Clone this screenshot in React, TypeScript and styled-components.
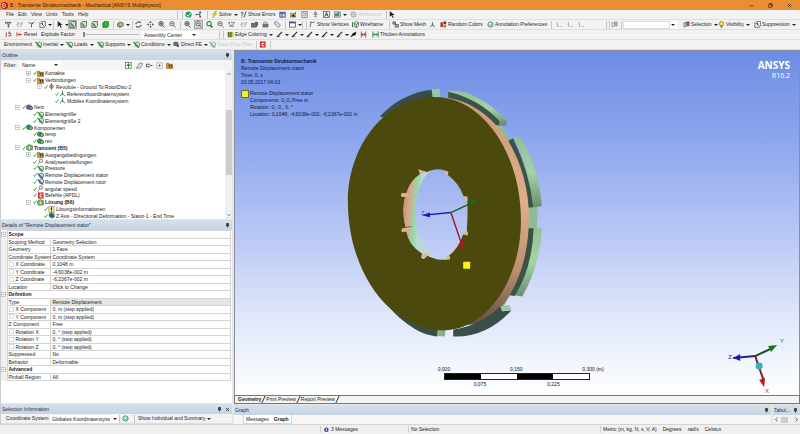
import React from "react";
import styled, { createGlobalStyle, css } from "styled-components";

const Global = createGlobalStyle`
  * { box-sizing: border-box; }
  html, body, #root { margin: 0; height: 100%; }
  body { font: 5px/7px "Liberation Sans", Arial, sans-serif; color: #222; background: #f0f0f0; overflow: hidden; }
  button, input, select, a { font: inherit; color: inherit; }
`;

const resetButton = css`
  appearance: none; border: 0; padding: 0; margin: 0; background: none; white-space: nowrap;
`;

const Page = styled.div`
  display: flex; flex-direction: column; min-height: 100vh; white-space: nowrap;
`;
const TitleBar = styled.header`
  display: flex; align-items: center; height: 10px; flex: none; padding: 0 2px 0 1px; gap: 2px; background: #ea8d33; color: #2b1a08;
`;
const Title = styled.h1`margin: 0; flex: 1; font: inherit;`;
const WindowButton = styled.button`${resetButton} width: 17px; height: 10px; display: grid; place-items: center;`;

const Bar = styled.div`
  display: flex; align-items: center; height: 10px; flex: none; background: #f2f2f2; border-bottom: 1px solid #dedede; overflow: hidden;
`;
const Slot = styled.div<{ $w: number }>`flex: 0 0 ${(p) => p.$w}px; display: flex; align-items: center;`;
const Tool = styled.button<{ $w: number; $off?: boolean; $on?: boolean }>`
  ${resetButton}
  flex: 0 0 ${(p) => p.$w}px; height: 9px; display: flex; align-items: center; gap: 1px;
  color: ${(p) => (p.$off ? "#b5b5b5" : "#262626")};
  opacity: ${(p) => (p.$off ? 0.6 : 1)};
  & > svg:first-child { background: ${(p) => (p.$on ? "#cfcfcf" : "none")}; outline: ${(p) => (p.$on ? "1px solid #aaa" : "none")}; }
`;
const Sep = styled.span<{ $w?: number }>`
  flex: 0 0 ${(p) => p.$w ?? 4}px; height: 8px; border-left: 1px solid #c6c6c6;
`;
const Caret = styled.span`
  margin-left: 1px; border: 1px solid transparent; border-width: 2px 2px 0; border-top-color: #222; width: 0; height: 0;
`;
const Combo = styled.select<{ $w: number; $line?: boolean }>`
  appearance: none; border: ${(p) => (p.$line ? "1px solid #ddd" : "0")}; padding: 0 2px; background: #fff; height: 8px; line-height: 6px; width: ${(p) => p.$w}px; border-radius: 0;
`;
const ComboBox = styled.label<{ $w: number }>`
  flex: 0 0 ${(p) => p.$w}px; display: flex; align-items: center; background: #fff; padding-right: 3px; overflow: hidden;
`;
const Range = styled.input`
  appearance: none; width: 56px; height: 5px; margin: 0; background: linear-gradient(#bbb, #bbb) 0 2px / 100% 1px no-repeat;
  &::-webkit-slider-thumb { appearance: none; width: 2px; height: 5px; background: #888; }
`;

const Workspace = styled.main`display: flex; flex: 1; min-height: 0; gap: 2px; background: #e4e6ea;`;
const LeftColumn = styled.div`flex: 0 0 29%; display: flex; flex-direction: column; gap: 1px; min-width: 0;`;
const RightColumn = styled.div`flex: 1; display: flex; flex-direction: column; min-width: 0;`;
const Panel = styled.section<{ $grow?: number }>`
  flex: ${(p) => (p.$grow ? `${p.$grow} 0 0` : "none")}; min-height: 0; display: flex; flex-direction: column; background: #fff; border-left: 1px solid #c8ccd2;
`;
const PanelHead = styled.div`
  display: flex; align-items: center; gap: 3px; flex: none; height: 10px; padding: 0 2px 0 1px; background: linear-gradient(#d6e0ec, #c6d4e4); color: #26323f;
`;
const PanelTitle = styled.h2`margin: 0; flex: 1; font: inherit;`;
const IconButton = styled.button`${resetButton} display: grid; place-items: center;`;
const FilterBar = styled.div`display: flex; align-items: center; height: 10px; flex: none; background: #f4f4f4; padding-left: 3px;`;
const TreeArea = styled.div`display: flex; flex: 1; min-height: 0;`;
const Tree = styled.ul`
  list-style: none; margin: 0; padding: 0; flex: 1; display: flex; flex-direction: column; min-height: 0;
`;
const TreeRow = styled.li<{ $level: number; $bold?: boolean }>`
  flex: 1 1 0; min-height: 0; display: flex; align-items: center; line-height: 6px;
  padding-left: ${(p) => 14 + p.$level * 11}px; font-weight: ${(p) => (p.$bold ? 700 : 400)};
`;
const TreeText = styled.span`padding-left: 1px;`;
const Expander = styled.span`width: 7px; display: flex; align-items: center;`;
const ScrollTrack = styled.div`
  width: 7px; background: #f0f0f0; display: flex; flex-direction: column; align-items: center; justify-content: space-between; padding: 2px 0;
`;
const ScrollThumb = styled.div`width: 6px; height: 65px; margin-bottom: 4px; background: #cdcdcd;`;

const Grid = styled.table`
  border-collapse: collapse; width: calc(100% - 1px); height: 151px; line-height: 6px; table-layout: fixed;
  th, td { padding: 0 2px; border: 1px solid #d4d4d4; text-align: left; font-weight: 400; }
  td:first-child { width: 6px; border-width: 0; background: #f0f0f0; padding: 0; }
  th { padding: 0 1px; }
`;
const Group = styled.th`&& { font-weight: 700; }`;
const Value = styled.td<{ $shade?: boolean }>`background: ${(p) => (p.$shade ? "#e6e6e0" : "#fff")};`;
const Label = styled.label`display: flex; align-items: center; gap: 2px;`;
const Tick = styled.input`appearance: none; margin: 0; width: 5px; height: 5px; border: 1px solid #dcdcdc; background: #fff;`;

const Canvas = styled.div`
  position: relative; flex: 1; min-height: 0; overflow: hidden; border: 1px solid #8a8f99; border-bottom: 0;
  background: linear-gradient(#6d8de5 0%, #8da5ec 25%, #b3c3f3 50%, #dce4fa 75%, #ffffff 100%);
`;
const Scene = styled.svg`position: absolute; inset: 0; width: 100%; height: 100%;`;
const Caption = styled.div`position: absolute; left: 6px; top: 7px; color: #101840; line-height: 7px;`;
const Strong = styled.strong`display: block;`;
const Legend = styled.div`display: grid; grid-template-columns: 8px auto; gap: 0 1px; margin-top: 4px;`;
const Swatch = styled.span`width: 8px; height: 8px; background: #f6f01e; border: 1px solid #6d7020;`;
const Brand = styled.div`
  position: absolute; right: 9px; top: 9px; text-align: right; color: #fff; font: 700 10px/11px "Open Sans", sans-serif;
`;
const Release = styled.div`font-size: 7px; line-height: 9px; font-weight: 400;`;
const Ruler = styled.div`position: absolute; left: 37%; bottom: 7px; width: 146px; color: #111;`;
const RulerLabels = styled.div<{ $inner?: boolean }>`
  display: flex; justify-content: space-between; margin: ${(p) => (p.$inner ? "0 30px" : "0 -14px 0 -6px")};
`;
const RulerBar = styled.div`display: flex; height: 7px; margin-bottom: 1px; border: 1px solid #222; background: #fff;`;
const RulerPart = styled.span<{ $dark?: boolean }>`flex: 1; background: ${(p) => (p.$dark ? "#000" : "#fff")};`;

const SheetTabs = styled.div`display: flex; align-items: center; height: 9px; flex: none; background: #f4f4f4; border: 1px solid #777; padding-left: 3px; gap: 2px;`;
const Tab = styled.button<{ $on?: boolean }>`
  ${resetButton} line-height: 6px; font-weight: ${(p) => (p.$on ? 700 : 400)};
`;
const SheetTab = styled(Tab)`
  display: flex; gap: 2px;
  &::after { content: ""; height: 7px; border-right: 1px solid #333; transform: skewX(-25deg); }
`;
const Docks = styled.div`display: flex; gap: 2px; padding-top: 1px; flex: none; height: 20px;`;
const Dock = styled.section<{ $fixed?: boolean }>`
  flex: ${(p) => (p.$fixed ? "0 0 27px" : "1")}; min-width: 0; display: flex; flex-direction: column; background: #f6f6f6;
`;
const DockTabs = styled.div`
  display: flex; align-items: center; align-self: flex-start; height: 9px; margin-left: 9px; padding: 0 2px; gap: 5px; background: #fff; border: 1px solid #d8d8d8; border-top: 0;
`;
const DockScroll = styled.div`display: flex; align-items: center; justify-content: space-between; height: 9px; padding: 0 1px; background: #f0f0f0;`;
const DockThumb = styled.span`width: 7px; height: 6px; background: #cdcdcd; margin-right: 5px;`;
const StatusBar = styled.footer`
  display: grid; grid-template-columns: 40% 11% 24% 1fr; align-items: center; height: 10px; flex: none; background: #f0f0f0; border-top: 1px solid #d4d4d4;
`;
const StatusCell = styled.span<{ $gap?: number }>`display: flex; align-items: center; gap: ${(p) => p.$gap ?? 2}px; padding-left: 2px; border-left: 1px solid #cfcfcf; height: 7px;`;

type Kind = string;
const art: Record<Kind, React.ReactNode> = {
  app: <><rect width="16" height="16" rx="8" fill="#b3161b" /><path d="M4 12V4h5q3 2 0 4 4 2 0 4z" fill="none" stroke="#fff" strokeWidth="2" /></>,
  check: <path d="M2 9l4 5L14 2" fill="none" stroke="#1fa32b" strokeWidth="3.5" />,
  okball: <><circle cx="8" cy="8" r="7" fill="#1f9a55" /><path d="M4 8l3 4 6-8" stroke="#fff" strokeWidth="2" fill="none" /></>,
  nodes: <><path d="M3 8h8M11 3v10" stroke="#3557a8" strokeWidth="2" /><circle cx="3" cy="8" r="2" fill="#2a9a3a" /><circle cx="12" cy="3" r="2" fill="#335" /><circle cx="12" cy="13" r="2" fill="#a33" /></>,
  bolt: <path d="M10 0L3 9h4l-3 7 9-10H9l4-6z" fill="#e4d520" stroke="#8b8520" />,
  query: <path d="M2 5q3-5 5 0c0 3-3 2-3 6M4 13v2M9 15L14 1" fill="none" stroke="#333" strokeWidth="2" />,
  sheet: <><rect x="2" y="3" width="12" height="11" fill="#dce5f5" stroke="#334a8c" strokeWidth="2" /><path d="M2 5h12M7 4v10" stroke="#334a8c" strokeWidth="2" /></>,
  picture: <><rect x="1" y="5" width="12" height="9" fill="#dcd24c" stroke="#655" /><path d="M8 8l6-6M3 12l4-4 5 5" stroke="#345" strokeWidth="2" /></>,
  page: <><rect x="2" y="1" width="12" height="14" fill="#eee" stroke="#666" strokeWidth="1.5" /><path d="M4 5h7M5 9l3 3 5-6" stroke="#777" strokeWidth="2" fill="none" /></>,
  letter: <><rect x="1" y="1" width="14" height="14" fill="#fff" stroke="#444" strokeWidth="1.5" /><path d="M4 13L8 3l4 10M6 9h5" stroke="#333" strokeWidth="2" fill="none" /></>,
  leaf: <path d="M8 1L4 8h8L8 1v13M5 13h6" stroke="#888" fill="#bbb" strokeWidth="2" />,
  chart: <><rect x="1" y="2" width="14" height="12" fill="#cfe2e2" stroke="#344" /><path d="M3 12V7h3v5M8 12V4h3v8" stroke="#247a4a" strokeWidth="2" fill="none" /></>,
  globe: <><circle cx="8" cy="8" r="6" fill="#ccc" stroke="#777" strokeWidth="2" /><path d="M8 2v12M2 8h12" stroke="#777" /></>,
  cursor: <path d="M4 0v13l4-3 3 6 2-1-3-6h5z" fill="#222" />,
  funnel: <path d="M2 3h12L9 8v6H7V8zM1 1v6" fill="#aaa" stroke="#444" strokeWidth="1.5" />,
  xy: <path d="M1 10l4-7v11M9 4l3 5 3-7-5 12" fill="none" stroke="#aaa" strokeWidth="2" />,
  pick: <path d="M1 2l5 5M14 2L8 8v6M9 3v4" fill="none" stroke="#444" strokeWidth="2" />,
  cube: <><path d="M2 4l3-3h10v10l-3 4H2z" fill="#e8eee8" stroke="#444" strokeWidth="1.5" /><path d="M5 5l7 7M8 4v5" stroke="#333" strokeWidth="2" /></>,
  gcube: <><path d="M2 4l3-3h10v10l-3 4H2z" fill="#cfe5cf" stroke="#333" strokeWidth="1.5" /><path d="M4 5l7 8M5 11h4" stroke="#268a32" strokeWidth="2.5" /></>,
  solid: <path d="M2 4l3-3h10v10l-3 4H2z" fill="#27b52e" stroke="#14701a" strokeWidth="1.5" />,
  view: <><path d="M1 6l6-4 7 3v6l-7 4-6-3z" fill="#7aa56a" stroke="#555" strokeWidth="1.5" /><circle cx="9" cy="8" r="3" fill="#d8c94a" /></>,
  rotate: <path d="M3 6a5 5 0 019-2V1M13 10a5 5 0 01-9 2v3M3 6H1M13 10h2" fill="none" stroke="#333" strokeWidth="2.2" />,
  pan: <path d="M8 0l3 4H5zM8 16l3-4H5zM0 8l4-3v6zM16 8l-4-3v6zM7 7h2v2H7z" fill="#333" />,
  zoomin: <><circle cx="7" cy="6" r="5" fill="#eee" stroke="#444" strokeWidth="2" /><path d="M4 6h6M7 3v6M10 10l5 5" stroke="#444" strokeWidth="2" /></>,
  zoomout: <><circle cx="7" cy="6" r="5" fill="#eee" stroke="#666" strokeWidth="2" /><path d="M4 6h6M10 10l5 5" stroke="#555" strokeWidth="2" /></>,
  zoomg: <><circle cx="7" cy="6" r="5" fill="#e5f5e5" stroke="#2d8a2d" strokeWidth="2.5" /><path d="M10 10l5 5" stroke="#2a4a2a" strokeWidth="3" /></>,
  iso: <path d="M1 3h4M7 3h4M13 3h2M3 3v4l5 4 5-4V3M3 13l5-2 5 2" fill="none" stroke="#556" strokeWidth="1.8" />,
  save: <><rect x="1" y="5" width="12" height="9" fill="#5b7188" stroke="#333" /><path d="M9 3h6v8" stroke="#334" strokeWidth="2" fill="none" /></>,
  green: <><path d="M2 7h12v7H2z" fill="#5b8a4a" stroke="#444" /><path d="M4 2h7v5H4z" fill="#ddd" stroke="#666" /></>,
  tag: <path d="M1 3l5-2 9 9-5 5-8-8z" fill="#ddd" stroke="#666" strokeWidth="1.6" />,
  window: <><rect x="1" y="2" width="14" height="12" fill="#fff" stroke="#444" strokeWidth="1.6" /><path d="M1 4h14" stroke="#3350a8" strokeWidth="3" /></>,
  vertex: <path d="M2 14L5 3h8M2 3h4" fill="none" stroke="#555" strokeWidth="1.8" />,
  wire: <><path d="M5 5l5-4 5 3v7l-5 4-5-3zM5 5l5 3 5-4M10 8v7" fill="none" stroke="#333" strokeWidth="1.5" /><path d="M1 2v12" stroke="#2a8a3a" strokeWidth="2.5" /></>,
  mesh: <><path d="M2 2h6v5H2zM7 8h8v6H7z" fill="#bcd" stroke="#345" strokeWidth="1.5" /><path d="M11 8v6M5 2v5" stroke="#345" /></>,
  axes: <><path d="M8 9V2M8 9l-6 5M8 9l6 5" stroke="#3b7c86" strokeWidth="2" fill="none" /><circle cx="8" cy="9" r="2" fill="#466" /></>,
  colors: <><path d="M1 3h6v11H1z" fill="#b33b2c" /><path d="M8 1h6v6H8z" fill="#733" /><path d="M8 8h6v7H8z" fill="#c77a2a" /></>,
  note: <><circle cx="8" cy="8" r="6" fill="#dff3ea" stroke="#2b8a6d" strokeWidth="2" /><path d="M5 8l3 3 5-6" stroke="#2b8a6d" strokeWidth="2" fill="none" /></>,
  dots: <path d="M3 3v9M3 12h2M8 12h2M12 12h2" fill="none" stroke="#999" strokeWidth="2" />,
  hand: <><path d="M2 4h5v9H2z" fill="#ddd" stroke="#555" strokeWidth="1.5" /><path d="M8 2h6v9H9z" fill="#b66" stroke="#444" strokeWidth="1.5" /></>,
  bulb: <><circle cx="8" cy="6" r="5" fill="#f2e63a" stroke="#77702a" strokeWidth="1.5" /><path d="M6 13h4" stroke="#555" strokeWidth="4" /></>,
  explode: <><path d="M3 3v11M7 5h6v6H7" fill="none" stroke="#a54038" strokeWidth="2" /><path d="M10 1v4" stroke="#444" strokeWidth="2" /></>,
  reset: <path d="M2 3v9M5 8h9M5 8l4-4M5 8l4 4" fill="none" stroke="#b03a2a" strokeWidth="2" />,
  edge: <><path d="M1 2h14v12H1z" fill="#d8c93a" /><path d="M4 2v12M9 2v12" stroke="#363" strokeWidth="3" /></>,
  line: <><path d="M2 14L14 2" stroke="#222" strokeWidth="2.4" /><path d="M4 12h5" stroke="#444" strokeWidth="2" /></>,
  thick: <path d="M2 14L6 6l8-4-2 7-6 2z" fill="#111" stroke="#111" />,
  width: <path d="M3 1v14M13 1v14M3 8h10M6 5v6M10 5v6" stroke="#b23a34" strokeWidth="2" fill="none" />,
  gwidth: <path d="M2 1v14M14 1v14M2 8h12M6 5L3 8l3 3M10 5l3 3-3 3" stroke="#2c8a3a" strokeWidth="2" fill="none" />,
  load: <><path d="M5 5l4-3 6 3v6l-5 3-5-3z" fill="#d5ead5" stroke="#2c6a3c" strokeWidth="1.6" /><path d="M1 2l8 8M9 10l5 5" stroke="#247a30" strokeWidth="2.4" /></>,
  bload: <><path d="M5 5l4-3 6 3v6l-5 3-5-3z" fill="#cfdcee" stroke="#2c4a7c" strokeWidth="1.6" /><path d="M1 3l8 7M9 10l5 5" stroke="#346" strokeWidth="2.4" /></>,
  direct: <><path d="M2 3h9v7H2z" fill="#778" stroke="#334" strokeWidth="1.5" /><circle cx="11" cy="11" r="3" fill="#555" /></>,
  command: <><rect x="2" y="1" width="13" height="14" fill="#c9302c" /><path d="M12 5H7v6h5" fill="none" stroke="#fff" strokeWidth="2.2" /></>,
  folder: <><path d="M1 3h5l2 2h7v10H1z" fill="#c99a3a" stroke="#6b4a12" /><path d="M5 7h3v6M10 7h3v6" stroke="#4a2a10" strokeWidth="2" fill="none" /></>,
  joint: <><circle cx="8" cy="8" r="4" fill="#ddd" stroke="#555" strokeWidth="2" /><path d="M8 0v16" stroke="#555" strokeWidth="1.6" /></>,
  netz: <><circle cx="6" cy="7" r="5" fill="#6b73b5" stroke="#224" strokeWidth="1.5" /><circle cx="11" cy="9" r="4" fill="#8a8fc8" stroke="#224" strokeWidth="1.5" /></>,
  comp: <><circle cx="6" cy="7" r="5" fill="#3aa04a" stroke="#153f1c" strokeWidth="1.5" /><circle cx="11" cy="9" r="4" fill="#7cc487" stroke="#153f1c" strokeWidth="1.5" /></>,
  env: <><path d="M1 5l6-4 8 3v9l-9 2-5-3z" fill="#62ad5a" stroke="#2c5a2a" /><path d="M3 9h9M8 4v9" stroke="#d4e6a0" strokeWidth="2" /></>,
  info: <><rect x="2" y="1" width="12" height="14" fill="#f0e58a" stroke="#665" /><path d="M8 3v6M8 11v2" stroke="#222" strokeWidth="2.4" /></>,
  result: <><path d="M2 4l5-3 8 3v7l-6 4-7-4z" fill="#2b8f5a" /><path d="M3 5l11 7" stroke="#1c4ca0" strokeWidth="3" /></>,
  spin: <><circle cx="9" cy="6" r="4" fill="#eee" stroke="#777" strokeWidth="2" /><path d="M6 9l-4 6" stroke="#777" strokeWidth="2" /></>,
  plus: <><rect x="2" y="2" width="12" height="12" fill="#fff" stroke="#999" strokeWidth="1.6" /><path d="M5 8h6M8 5v6" stroke="#555" strokeWidth="1.6" /></>,
  minus: <><rect x="2" y="2" width="12" height="12" fill="#fff" stroke="#999" strokeWidth="1.6" /><path d="M5 8h6" stroke="#555" strokeWidth="1.6" /></>,
  pin: <path d="M5 1h6v8H5zM3 9h10M8 9v6" fill="#444" stroke="#222" strokeWidth="2" />,
  close: <path d="M3 3l10 10M13 3L3 13" stroke="#222" strokeWidth="2.5" />,
  min: <path d="M2 9h12" stroke="#3a2008" strokeWidth="2" />,
  restore: <path d="M5 5V2h9v9h-3M2 5h9v9H2z" fill="none" stroke="#3a2008" strokeWidth="2" />,
  up: <path d="M2 11l6-6 6 6" fill="none" stroke="#333" strokeWidth="2.4" />,
  down: <path d="M2 5l6 6 6-6" fill="none" stroke="#333" strokeWidth="2.4" />,
  left: <path d="M11 2L5 8l6 6" fill="none" stroke="#333" strokeWidth="2.4" />,
  right: <path d="M5 2l6 6-6 6" fill="none" stroke="#333" strokeWidth="2.4" />,
  refresh: <><rect x="1" y="1" width="13" height="14" fill="#fff" stroke="#555" strokeWidth="1.5" /><path d="M4 9l4-5 4 5M8 5v8" fill="none" stroke="#2a8a2a" strokeWidth="2.4" /></>,
  eraser: <path d="M1 14h8l6-10-6-2-5 8z" fill="#eee" stroke="#555" strokeWidth="1.5" />,
  flow: <path d="M1 5h6l3 3-3 3H1zM10 8h5" fill="none" stroke="#444" strokeWidth="2" />,
  message: <><circle cx="9" cy="7" r="6" fill="#2e4fae" /><path d="M9 4v6" stroke="#fff" strokeWidth="2.4" /></>,
};
const Svg = styled.svg<{ $s: number }>`width: ${(p) => p.$s}px; height: ${(p) => p.$s}px; flex: none; display: block;`;
const Icon = ({ k, s = 7 }: { k: Kind; s?: number }) => (
  <Svg viewBox="0 0 16 16" $s={s} aria-hidden="true">{art[k]}</Svg>
);

type Item = { w: number; k?: Kind; t?: string; c?: boolean; off?: boolean; on?: boolean; sep?: boolean };
const i = (w: number, k?: Kind, t?: string, c?: boolean, extra?: Partial<Item>): Item => ({ w, k, t, c, ...extra });
const s = (w: number): Item => ({ w, sep: true });
const Items = ({ list }: { list: Item[] }) => (
  <>
    {list.map((it, n) =>
      it.sep ? (
        <Sep key={n} $w={it.w} />
      ) : it.k || it.t ? (
        <Tool key={n} $w={it.w} $off={it.off} $on={it.on} disabled={it.off} aria-label={it.t ?? it.k}>
          {it.k && <Icon k={it.k} />}
          {it.t}
          {it.c && <Caret />}
        </Tool>
      ) : (
        <Slot key={n} $w={it.w} />
      )
    )}
  </>
);

const menuRow: Item[] = [
  i(6), i(12, undefined, "File"), i(13, undefined, "Edit"), i(15, undefined, "View"), i(16, undefined, "Units"), i(16, undefined, "Tools"), i(99, undefined, "Help"),
  s(5), s(3), i(10, "okball"), i(12, "nodes"), s(4), i(29, "bolt", "Solve", true), i(39, "query", "Show Errors"),
  i(11, "sheet"), i(11, "picture"), i(11, "page"), i(11, "leaf"), i(11, "letter"), i(16, "chart", undefined, true),
  i(36, "globe", "Worksheet", false, { off: true }), s(2), i(10, "cursor"),
];
const viewRow: Item[] = [
  i(5), i(11, "funnel"), i(12, "xy"), i(11, "pick"), i(14, "cube", undefined, true), s(3), i(13, "cursor", undefined, true),
  i(11, "gcube", undefined, false, { on: true }), i(11, "gcube"), i(11, "gcube"), i(11, "solid"), s(4), i(15, "view", undefined, true), s(3),
  i(12, "rotate"), i(11, "pan"), i(11, "zoomin"), i(11, "zoomout"), s(4), i(11, "zoomin"), i(11, "zoomout", undefined, false, { on: true }), i(11, "zoomg"), i(11, "zoomout"),
  i(12, "iso"), i(11, "xy"), i(11, "save"), i(12, "green"), i(11, "tag"), s(4), i(13, "window", undefined, true), s(4), s(3),
  i(43, "vertex", "Show Vertices"), i(37, "wire", "Wireframe"), s(3), i(37, "mesh", "Show Mesh"), i(11, "axes"), i(47, "colors", "Random Colors"),
  i(64, "note", "Annotation Preferences"), s(5), i(11, "dots"), i(11, "dots"), i(28, "dots"), s(3), s(2), i(10, "hand", undefined, false, { off: true }),
];
const showRow: Item[] = [i(35, "hand", "Selection", true), i(36, "bulb", "Visibility", true), i(40, "cube", "Suppression", true)];
const edgeRow: Item[] = [
  s(4), s(4), i(49, "edge", "Edge Coloring", true), i(15, "line", undefined, true), i(15, "line", undefined, true), i(15, "line", undefined, true),
  i(15, "line", undefined, true), i(14, "line", undefined, true), i(10, "thick"), i(12, "width"), i(56, "gwidth", "Thicken Annotations"),
];
const envRow: Item[] = [
  i(4), i(31, undefined, "Environment"), i(31, "load", "Inertial", true), i(31, "load", "Loads", true), i(36, "load", "Supports", true),
  i(40, "load", "Conditions", true), i(36, "direct", "Direct FE", true), i(47, "load", "Mass Flow Rate", false, { off: true }), s(3), i(11, "command"), s(3),
];

type Node = [number, Kind | null, string, string, boolean?];
const nodes: Node[] = [
  [1, "plus", "folder", "Kontakte"], [1, "minus", "folder", "Verbindungen"], [2, "minus", "joint", "Revolute - Ground To RotorDisc-2"],
  [3, null, "axes", "Referenzkoordinatensystem"], [3, null, "axes", "Mobiles Koordinatensystem"], [0, "minus", "netz", "Netz"],
  [1, null, "load", "Elementgröße"], [1, null, "load", "Elementgröße 2"], [0, "minus", "comp", "Komponenten"], [1, null, "comp", "temp"],
  [1, null, "comp", "rev"], [0, "minus", "env", "Transient (B5)", true], [1, "plus", "folder", "Ausgangsbedingungen"],
  [1, null, "spin", "Analyseeinstellungen"], [1, null, "load", "Pressure"], [1, null, "bload", "Remote Displacement stator"],
  [1, null, "bload", "Remote Displacement rotor"], [1, null, "spin", "angular speed"], [1, null, "command", "Befehle (APDL)"],
  [1, "minus", "env", "Lösung (B6)", true], [2, null, "info", "Lösungsinformationen"], [2, null, "result", "Z Axis - Directional Deformation - Stator-1 - End Time"],
];

type Detail = { g?: string; l?: string; v?: string; tick?: boolean; shade?: boolean };
const details: Detail[] = [
  { g: "Scope" }, { l: "Scoping Method", v: "Geometry Selection" }, { l: "Geometry", v: "1 Face" }, { l: "Coordinate System", v: "Coordinate System" },
  { l: "X Coordinate", v: "0,1048 m", tick: true }, { l: "Y Coordinate", v: "-4,6038e-002 m", tick: true }, { l: "Z Coordinate", v: "-6,2367e-002 m", tick: true },
  { l: "Location", v: "Click to Change" }, { g: "Definition" }, { l: "Type", v: "Remote Displacement", shade: true },
  { l: "X Component", v: "0, m  (step applied)", tick: true }, { l: "Y Component", v: "0, m  (step applied)", tick: true }, { l: "Z Component", v: "Free" },
  { l: "Rotation X", v: "0, °  (step applied)", tick: true }, { l: "Rotation Y", v: "0, °  (step applied)", tick: true }, { l: "Rotation Z", v: "0, °  (step applied)", tick: true },
  { l: "Suppressed", v: "No" }, { l: "Behavior", v: "Deformable" }, { g: "Advanced" }, { l: "Pinball Region", v: "All" },
];

const hole = "M247 277 L263 281 Q290 265 318 276 L327 279 L326 289 Q360 315 373 353 L384 356 Q387 410 383 455 L385 470 L372 468 Q358 510 329 532 L333 543 L322 544 Q290 547 264 532 L253 542 L246 538 L249 526 Q208 500 201 459 L187 460 L188 449 L199 447 Q186 400 197 355 L185 354 L188 343 L201 343 Q214 305 242 287 Z";
const Model = () => (
  <Scene viewBox="0 0 566 345" preserveAspectRatio="xMidYMid meet" role="img" aria-label="Rotor disc">
    <defs>
      <linearGradient id="wall" x1="0" x2="0.5" y1="0.3" y2="0.4"><stop offset="0" stopColor="#b58e70" /><stop offset="0.45" stopColor="#d6a888" /><stop offset="0.8" stopColor="#8fdcae" /><stop offset="1" stopColor="#bcd8d2" /></linearGradient>
      <linearGradient id="peach" x1="0" x2="0" y1="0" y2="1"><stop offset="0" stopColor="#c99a7a" /><stop offset="0.45" stopColor="#e0ae88" /><stop offset="0.75" stopColor="#bd9072" /><stop offset="1" stopColor="#5d4a3c" /></linearGradient>
      <linearGradient id="rim" x1="0" x2="0" y1="0" y2="1"><stop offset="0" stopColor="#93bf95" /><stop offset="0.5" stopColor="#a3d3a5" /><stop offset="1" stopColor="#6b8f70" /></linearGradient>
    </defs>
    <g transform="translate(105 28) scale(.3333)">
      <path d="M122 112C165 65 220 38 277 32L282 62L160 130Z" fill="#384e48" />
      <path d="M277 31L301 29L304 54L280 54Z" fill="#9bc4a2" />
      <path d="M455 100Q560 220 595 385Q600 470 570 560L490 690L460 640L500 400Z" fill="#8fbb94" />
      <path d="M327 36Q350 32 385 42Q455 70 504 127L500 140L470 135Q400 75 327 50Z" fill="url(#rim)" />
      <path d="M327 38Q420 60 482 127L480 140L468 138Q400 75 327 57Z" fill="#3a5346" />
      <path d="M504 127L500 141L479 141L482 128Z" fill="#718f73" />
      <path d="M524 176L547 178Q600 270 609 383L582 386Q574 270 524 176Z" fill="url(#rim)" />
      <path d="M508 186L522 178Q572 280 583 386L566 388Q558 280 508 186Z" fill="#3a5346" />
      <path d="M582 447L609 449Q604 560 550 655L526 651Q578 560 582 447Z" fill="url(#rim)" />
      <path d="M568 449L584 449Q580 570 527 653L505 650Q560 570 568 449Z" fill="#3a5346" />
      <path fillRule="evenodd" d={`M286 54C455 50 570 230 570 415C570 560 520 670 440 735L300 750L150 600L150 200Z ${hole}`} fill="url(#peach)" />
      <path d="M342 755Q430 740 483 684L490 699L517 697Q440 779 342 775Z" fill="#384e48" />
      <path d="M484 685L510 680L518 694L492 699Z" fill="#9dc9a5" />
      <path d="M130 662C180 730 240 770 294 775L297 750L200 650Z" fill="#384e48" />
      <path d="M295 750L319 750L317 775L294 774Z" fill="#93ad93" />
      <path fillRule="evenodd" d={`M286 54C429 54 546 221 546 425C546 608 441 757 312 757C154 757 25 583 25 370C25 196 142 54 286 54Z ${hole}`} fill="#4c490e" />
      <path d="M247 277L263 281L276 275Q228 315 228 405Q232 510 300 543L264 532L253 542L246 538L249 526Q208 500 201 459L187 460L188 449L199 447Q186 400 197 355L185 354L188 343L201 343Q214 305 242 287Z" fill="url(#wall)" />
      <path d="M185 344L208 345L210 354L187 355ZM187 450L216 445L212 455L187 460ZM236 272L262 279L242 285ZM316 275L327 279L326 289L316 284ZM373 353L385 354L385 366L377 364ZM374 460L386 460L386 471L376 469ZM321 532L332 534L333 543L322 543ZM246 530L268 522L264 532L253 542Z" fill="#dcb496" />
      <path d="M188 449L216 444" stroke="#74242a" strokeWidth="2" />
      <path d="M335 402L262 409" stroke="#2018b8" strokeWidth="4" /><path d="M248 410L272 402L272 416Z" fill="#1c14b4" />
      <path d="M335 402L400 372" stroke="#175c1c" strokeWidth="4" /><path d="M418 362L390 366L396 379Z" fill="#156a1b" />
      <path d="M335 402L367 496" stroke="#a51522" strokeWidth="4" /><path d="M376 523L359 496L372 489Z" fill="#b3141f" />
      <rect x="372" y="550" width="21" height="21" rx="2" fill="#f6f414" />
      <text x="246" y="410" fontSize="15" fill="#3447c8">Z</text><text x="424" y="356" fontSize="15" fill="#2a6a2a">Y</text>
    </g>
    <g transform="translate(485 287)">
      <path d="M37 19L15 21" stroke="#20208c" strokeWidth="2" /><path d="M15 21L22 17V24Z" fill="#1a1ab4" />
      <path d="M37 19L54 11" stroke="#1d4a22" strokeWidth="2" /><path d="M59 8L50 9L53 15Z" fill="#157a1b" />
      <path d="M37 19L45 42" stroke="#7a2020" strokeWidth="2" /><path d="M46 50L41 43L47 41Z" fill="#b81a1f" />
      <circle cx="41" cy="29" r="3.5" fill="#28b5bd" />
      <text x="10" y="22" fontSize="6" fill="#222a8c">Z</text><text x="62" y="6" fontSize="6" fill="#2a6a2a">Y</text><text x="47" y="56" fontSize="6" fill="#b83030">X</text>
    </g>
  </Scene>
);

export default function App() {
  return (
    <Page>
      <Global />
      <TitleBar>
        <Icon k="app" />
        <Title>B : Transiente Strukturmechanik - Mechanical [ANSYS Multiphysics]</Title>
        <WindowButton aria-label="Minimize"><Icon k="min" s={5} /></WindowButton>
        <WindowButton aria-label="Restore"><Icon k="restore" s={5} /></WindowButton>
        <WindowButton aria-label="Close"><Icon k="close" s={5} /></WindowButton>
      </TitleBar>
      <Bar><Items list={menuRow} /></Bar>
      <Bar>
        <Items list={viewRow} />
        <Sep $w={2} />
        <ComboBox $w={55}><Combo $w={50} $line aria-label="Search" /><Caret /></ComboBox>
        <Slot $w={5} />
        <Items list={showRow} />
      </Bar>
      <Bar>
        <Items list={[i(5), i(11, "explode"), i(25, "reset", "Reset")]} />
        <Slot $w={42}><label htmlFor="explode">Explode Factor:</label></Slot>
        <Slot $w={59}><Range id="explode" type="range" defaultValue={0} /></Slot>
        <ComboBox $w={57}><Combo $w={51} aria-label="Center"><option>Assembly Center</option></Combo><Caret /></ComboBox>
        <Slot $w={20} />
        <Items list={edgeRow} />
      </Bar>
      <Bar><Items list={envRow} /></Bar>
      <Workspace>
        <LeftColumn>
          <Panel $grow={170}>
            <PanelHead><PanelTitle>Outline</PanelTitle><IconButton aria-label="Pin"><Icon k="pin" s={5} /></IconButton></PanelHead>
            <FilterBar>
              <Slot $w={16}><label htmlFor="filter">Filter:</label></Slot>
              <ComboBox $w={41}><Combo id="filter" $w={33}><option>Name</option></Combo><Caret /></ComboBox>
              <Slot $w={64} />
              <Items list={[i(11, "refresh"), i(10, "eraser"), i(10, "flow"), i(10, "plus"), i(10, "folder")]} />
            </FilterBar>
            <TreeArea>
              <Tree>
                {nodes.map(([level, box, icon, text, bold], n) => (
                  <TreeRow key={n} $level={level} $bold={bold}>
                    <Expander>{box && <Icon k={box} s={5} />}</Expander>
                    <Icon k="check" s={4} />
                    <Icon k={icon} />
                    <TreeText>{text}</TreeText>
                  </TreeRow>
                ))}
              </Tree>
              <ScrollTrack><Icon k="up" s={4} /><ScrollThumb /><Icon k="down" s={4} /></ScrollTrack>
            </TreeArea>
          </Panel>
          <Panel $grow={184}>
            <PanelHead><PanelTitle>Details of "Remote Displacement stator"</PanelTitle><IconButton aria-label="Pin"><Icon k="pin" s={5} /></IconButton></PanelHead>
            <Grid>
              <colgroup><col width="6" /><col width="43" /><col /></colgroup>
              <tbody>
                {details.map((d, n) => (
                  <tr key={n}>
                    <td>{d.g && <Icon k="minus" s={5} />}</td>
                    {d.g ? <Group colSpan={2}>{d.g}</Group> : (
                      <>
                        <th scope="row">{d.tick ? <Label><Tick type="checkbox" />{d.l}</Label> : d.l}</th>
                        <Value $shade={d.shade}>{d.v}</Value>
                      </>
                    )}
                  </tr>
                ))}
              </tbody>
            </Grid>
          </Panel>
          <Panel>
            <PanelHead><PanelTitle>Selection Information</PanelTitle><IconButton aria-label="Pin"><Icon k="pin" s={5} /></IconButton><IconButton aria-label="Close"><Icon k="close" s={5} /></IconButton></PanelHead>
            <Bar>
              <Slot $w={5} />
              <Slot $w={43}><label htmlFor="cs">Coordinate System:</label></Slot>
              <ComboBox $w={69}><Combo id="cs" $w={62}><option>Globales Koordinatensyste</option></Combo><Caret /></ComboBox>
              <Items list={[s(3), i(12, "note"), s(4), i(80, undefined, "Show Individual and Summary", true)]} />
            </Bar>
          </Panel>
        </LeftColumn>
        <RightColumn>
          <Canvas>
            <Model />
            <Caption>
              <Strong>B: Transiente Strukturmechanik</Strong>
              <div>Remote Displacement stator</div><div>Time: 0, s</div><div>03.05.2017 04:33</div>
              <Legend>
                <Swatch />
                <div><div>Remote Displacement stator</div><div>Components: 0,;0,;Free m</div><div>Rotation: 0,; 0,; 0, °</div><div>Location: 0,1048; -4,6038e-002; -6,2367e-002 m</div></div>
              </Legend>
            </Caption>
            <Brand>ANSYS<Release>R16.2</Release></Brand>
            <Ruler>
              <RulerLabels><span>0,000</span><span>0,150</span><span>0,300 (m)</span></RulerLabels>
              <RulerBar><RulerPart $dark /><RulerPart /><RulerPart $dark /><RulerPart /></RulerBar>
              <RulerLabels $inner><span>0,075</span><span>0,225</span></RulerLabels>
            </Ruler>
          </Canvas>
          <SheetTabs><SheetTab $on>Geometry</SheetTab><SheetTab>Print Preview</SheetTab><SheetTab>Report Preview</SheetTab></SheetTabs>
          <Docks>
            <Dock>
              <PanelHead><PanelTitle>Graph</PanelTitle><IconButton aria-label="Pin"><Icon k="pin" s={5} /></IconButton></PanelHead>
              <DockTabs><Tab>Messages</Tab><Tab $on>Graph</Tab></DockTabs>
            </Dock>
            <Dock $fixed>
              <PanelHead><PanelTitle>Tabul...</PanelTitle><IconButton aria-label="Pin"><Icon k="pin" s={5} /></IconButton></PanelHead>
              <DockScroll><Icon k="left" s={5} /><DockThumb /><Icon k="right" s={5} /></DockScroll>
            </Dock>
          </Docks>
        </RightColumn>
      </Workspace>
      <StatusBar>
        <span />
        <StatusCell><Icon k="message" s={6} />3 Messages</StatusCell>
        <StatusCell>No Selection</StatusCell>
        <StatusCell $gap={6}><span>Metric (m, kg, N, s, V, A)</span><span>Degrees</span><span>rad/s</span><span>Celsius</span></StatusCell>
      </StatusBar>
    </Page>
  );
}
